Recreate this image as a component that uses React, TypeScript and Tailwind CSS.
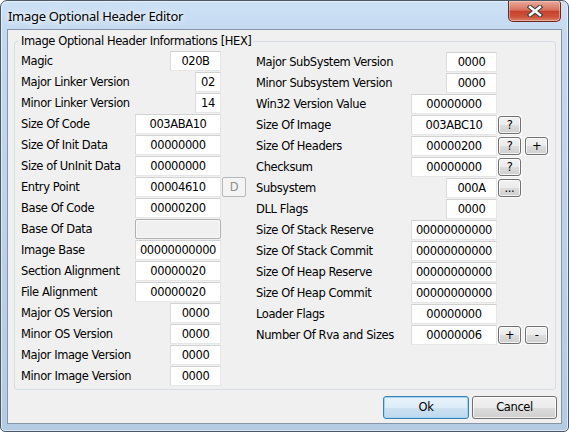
import React from "react";

type W = "xs" | "s" | "l";
type Row = { label: string; value?: string; w: W; disabled?: boolean; b1?: string; b2?: string; d?: boolean };

const widths: Record<W, string> = { xs: "w-[26px]", s: "w-[51px]", l: "w-[86px]" };

const left: Row[] = [
  { label: "Magic", value: "020B", w: "s" },
  { label: "Major Linker Version", value: "02", w: "xs" },
  { label: "Minor Linker Version", value: "14", w: "xs" },
  { label: "Size Of Code", value: "003ABA10", w: "l" },
  { label: "Size Of Init Data", value: "00000000", w: "l" },
  { label: "Size of UnInit Data", value: "00000000", w: "l" },
  { label: "Entry Point", value: "00004610", w: "l", d: true },
  { label: "Base Of Code", value: "00000200", w: "l" },
  { label: "Base Of Data", w: "l", disabled: true },
  { label: "Image Base", value: "00000000000", w: "l" },
  { label: "Section Alignment", value: "00000020", w: "l" },
  { label: "File Alignment", value: "00000020", w: "l" },
  { label: "Major OS Version", value: "0000", w: "s" },
  { label: "Minor OS Version", value: "0000", w: "s" },
  { label: "Major Image Version", value: "0000", w: "s" },
  { label: "Minor Image Version", value: "0000", w: "s" },
];

const right: Row[] = [
  { label: "Major SubSystem Version", value: "0000", w: "s" },
  { label: "Minor Subsystem Version", value: "0000", w: "s" },
  { label: "Win32 Version Value", value: "00000000", w: "l" },
  { label: "Size Of Image", value: "003ABC10", w: "l", b1: "?" },
  { label: "Size Of Headers", value: "00000200", w: "l", b1: "?", b2: "+" },
  { label: "Checksum", value: "00000000", w: "l", b1: "?" },
  { label: "Subsystem", value: "000A", w: "s", b1: "..." },
  { label: "DLL Flags", value: "0000", w: "s" },
  { label: "Size Of Stack Reserve", value: "00000000000", w: "l" },
  { label: "Size Of Stack Commit", value: "00000000000", w: "l" },
  { label: "Size Of Heap Reserve", value: "00000000000", w: "l" },
  { label: "Size Of Heap Commit", value: "00000000000", w: "l" },
  { label: "Loader Flags", value: "00000000", w: "l" },
  { label: "Number Of Rva and Sizes", value: "00000006", w: "l", b1: "+", b2: "-" },
];

function Edit({ row }: { row: Row }) {
  if (row.disabled)
    return (
      <div
        className={`${widths[row.w]} h-[20px] rounded-[2px] border border-[#b1b1b1] bg-[#f0f0f0] shadow-[inset_0_0_0_1px_#f8f8f8]`}
      />
    );
  return (
    <div
      className={`${widths[row.w]} h-[20px] flex items-center justify-center bg-white border border-[#e6e6e6] border-t-[#d2d2d2] border-l-[#dcdcdc] text-black`}
    >
      {row.value}
    </div>
  );
}

function SmallBtn({ label }: { label: string }) {
  return (
    <div className="p-[1px] bg-[#fafafa]">
      <div className="w-[23px] h-[18px] rounded-[3px] border border-[#707070] bg-[linear-gradient(#f2f2f2,#ebebeb_50%,#dddddd_50%,#cfcfcf)] shadow-[inset_0_0_0_1px_rgba(255,255,255,0.75)] flex items-center justify-center text-black leading-[12px]">
        {label}
      </div>
    </div>
  );
}

function LeftRow({ row }: { row: Row }) {
  return (
    <div className="flex items-center h-[20px]">
      <div className="flex-1 whitespace-nowrap">{row.label}</div>
      <Edit row={row} />
      <div className="w-[25px] flex justify-end">
        {row.d && (
          <div className="w-[24px] h-[20px] rounded-[2px] border border-[#b5b9bc] bg-[#f4f4f4] text-[#8f8f8f] flex items-center justify-center">
            D
          </div>
        )}
      </div>
    </div>
  );
}

function RightRow({ row }: { row: Row }) {
  return (
    <div className="flex items-center h-[20px]">
      <div className="flex-1 whitespace-nowrap">{row.label}</div>
      <Edit row={row} />
      <div className="w-[26px] flex justify-start">{row.b1 && <SmallBtn label={row.b1} />}</div>
      <div className="w-[26px] flex justify-end">{row.b2 && <SmallBtn label={row.b2} />}</div>
    </div>
  );
}

export default function App() {
  return (
    <div className="w-[569px] h-[432px] bg-white">
      <div className="w-[569px] h-[432px] flex flex-col rounded-t-[7px] rounded-b-[5px] border border-[#4b5866] bg-[linear-gradient(180deg,#cde1f6,#c3d9f0_8%,#bdd4ec_40%,#b4cbe4)] shadow-[inset_0_0_0_1px_rgba(255,255,255,0.55)]">
        <div className="h-[28px] flex justify-between items-start">
          <div className="pl-[7px] pt-[7px] font-['Noto_Sans',sans-serif] text-[13px] leading-[16px] tracking-[-0.3px] text-black [text-shadow:0_0_8px_#ffffff,0_0_4px_#ffffff]">
            Image Optional Header Editor
          </div>
          <div className="mr-[7px] w-[53px] h-[21px] rounded-b-[5px] rounded-tr-[3px] border border-[#6b2a20] border-t-0 bg-[linear-gradient(#eaa99a,#d7725f_45%,#c5432d_52%,#cc543d_80%,#e0866d)] shadow-[inset_0_0_0_1px_rgba(255,220,210,0.45)] flex items-center justify-center">
            <svg width="16" height="12" viewBox="0 0 16 12">
              <path d="M3 2 L13 10 M13 2 L3 10" stroke="#3f3f3f" strokeWidth="4.6" strokeLinecap="square" fill="none" />
              <path d="M3 2 L13 10 M13 2 L3 10" stroke="#ffffff" strokeWidth="2.4" strokeLinecap="square" fill="none" />
            </svg>
          </div>
        </div>
        <div className="flex-1 mx-[6px] mb-[7px] border border-[#8696a8] bg-[#f0f0f0] flex flex-col font-['DejaVu_Sans',sans-serif] text-[11.5px] tracking-[-0.4px] leading-[13px] text-black">
          <fieldset className="ml-[6px] mr-[5px] mt-[5px] p-0 border border-[#d5dfe5] rounded-[3px] min-w-0">
            <legend className="ml-[4px] px-[2px] leading-[13px]">Image Optional Header Informations [HEX]</legend>
            <div className="px-[6px] pt-[3px] pb-[3px] flex gap-[10px]">
              <div className="w-[225px] flex flex-col gap-[1px]">
                {left.map((r) => (
                  <LeftRow key={r.label} row={r} />
                ))}
              </div>
              <div className="w-[293px] mt-[1px] flex flex-col gap-[1px]">
                {right.map((r) => (
                  <RightRow key={r.label} row={r} />
                ))}
              </div>
            </div>
          </fieldset>
          <div className="mt-[6px] pr-[4px] flex justify-end gap-[3px]">
            <div className="w-[86px] h-[23px] rounded-[3px] border border-[#3c7fb1] bg-[linear-gradient(#e8f3fb,#dcecf8_50%,#cde2f2_50%,#c0d9ee)] shadow-[inset_0_0_0_1px_#9fd5f3] flex items-center justify-center">
              Ok
            </div>
            <div className="w-[85px] h-[23px] rounded-[3px] border border-[#707070] bg-[linear-gradient(#f2f2f2,#ebebeb_50%,#dddddd_50%,#cfcfcf)] shadow-[inset_0_0_0_1px_rgba(255,255,255,0.75)] flex items-center justify-center">
              Cancel
            </div>
          </div>
        </div>
      </div>
    </div>
  );
}
